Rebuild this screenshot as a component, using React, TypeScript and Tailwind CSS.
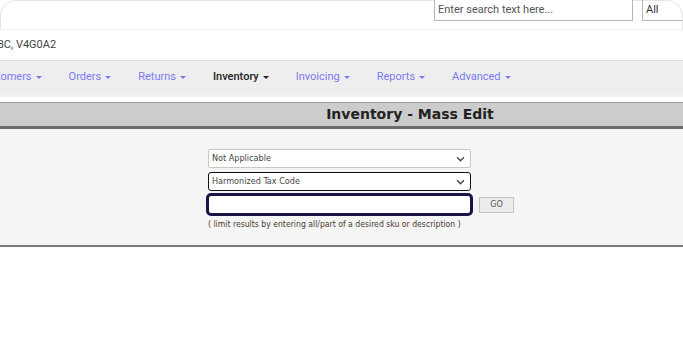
import React from "react";

const navItems = [
  { label: "Customers", active: false },
  { label: "Orders", active: false },
  { label: "Returns", active: false },
  { label: "Inventory", active: true },
  { label: "Invoicing", active: false },
  { label: "Reports", active: false },
  { label: "Advanced", active: false },
];

const Caret: React.FC<{ dark?: boolean }> = ({ dark }) => (
  <span
    className={`ml-[4px] inline-block h-0 w-0 border-x-[3px] border-t-[3px] border-x-transparent align-middle ${
      dark ? "border-t-[#222]" : "border-t-[#7b7bf0]"
    }`}
  />
);

const Chevron: React.FC = () => (
  <svg width="9" height="6" viewBox="0 0 10 7" className="shrink-0">
    <path d="M1 1.5 L5 5.5 L9 1.5" fill="none" stroke="#444" strokeWidth="1.6" />
  </svg>
);

const App: React.FC = () => {
  return (
    <div className="h-[349px] w-[683px] overflow-hidden bg-white font-['Roboto',sans-serif]">
      {/* top bar */}
      <div className="flex h-[30px] items-start rounded-t-[16px] border-x border-t border-b border-[#e6e6e6] border-b-[#eeeeee]">
        <div className="flex-1" />
        <div className="-mt-px flex h-[21px] w-[199px] items-center border border-t-0 border-[#b5b5b5] bg-white px-[3px] text-[11px] text-[#555]">
          Enter search text here...
        </div>
        <div className="-mt-px ml-[9px] flex h-[21px] w-[40px] items-center border border-t-0 border-r-0 border-[#b5b5b5] px-[3px] text-[11px] text-[#333]">
          All
        </div>
      </div>

      {/* address */}
      <div className="flex h-[30px] items-center overflow-hidden whitespace-nowrap pt-px text-[11px] text-[#444]">
        <span className="ml-[-3px]">BC, V4G0A2</span>
      </div>

      {/* nav */}
      <div className="flex h-[33px] items-center overflow-hidden whitespace-nowrap border-t border-[#dcdcdc] bg-[#eeeeee] text-[11px]">
        <div className="ml-[-22px] flex items-center gap-[27px]">
          {navItems.map((item) => (
            <span
              key={item.label}
              className={`flex items-center ${
                item.active ? "font-medium text-[#222]" : "text-[#7b7bf0]"
              }`}
            >
              {item.label}
              <Caret dark={item.active} />
            </span>
          ))}
        </div>
      </div>
      <div className="h-[4px] bg-[#f0f0f0]" />
      <div className="h-[5px] bg-white" />

      {/* title bar */}
      <div className="flex h-[27px] items-center justify-center border-t border-b-[3px] border-t-[#999] border-b-[#6a6a6a] bg-[#cccccc] pl-[137px] font-['DejaVu_Sans',sans-serif] text-[14px] font-bold text-[#222]">
        Inventory - Mass Edit
      </div>

      {/* form */}
      <div className="h-[118px] border-b-2 border-[#7a7a7a] bg-[#f5f5f5] pl-[206px] pt-[20px] font-['DejaVu_Sans_Condensed','DejaVu_Sans',sans-serif] text-[9px]">
        <div className="ml-[2px] flex h-[19px] w-[263px] items-center justify-between rounded-[2px] border border-[#c8c8c8] bg-white pl-[3px] pr-[5px] text-[#444]">
          Not Applicable
          <Chevron />
        </div>
        <div className="ml-[2px] mt-[4px] flex h-[19px] w-[263px] items-center justify-between rounded-[3px] border-[1.5px] border-[#111] bg-white pl-[3px] pr-[5px] text-[#444]">
          Harmonized Tax Code
          <Chevron />
        </div>
        <div className="mt-[2px] flex items-center gap-[6px]">
          <div className="h-[23px] w-[267px] rounded-[5px] border-[3px] border-[#1c1446] bg-white" />
          <button className="flex h-[16px] w-[35px] items-center justify-center border border-[#c4c4c4] bg-[#ececec] text-[9px] text-[#555]">
            GO
          </button>
        </div>
        <div className="ml-[2px] mt-[2px] text-[8.6px] text-[#4a3a30]">
          ( limit results by entering all/part of a desired sku or description )
        </div>
      </div>
    </div>
  );
};

export default App;
